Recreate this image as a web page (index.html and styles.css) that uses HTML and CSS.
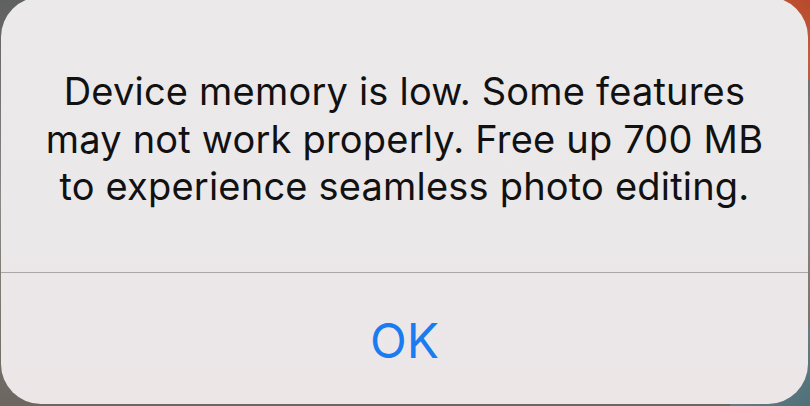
FILE: index.html
```html
<!DOCTYPE html>
<html lang="en">
<head>
<meta charset="utf-8">
<link rel="stylesheet" href="styles.css">
<title>Alert</title>
</head>
<body>
<div class="backdrop">
  <div class="alert" role="alertdialog">
    <div class="alert-body">
      <p class="alert-message">Device memory is low. Some features may not work properly. Free up 700 MB to experience seamless photo editing.</p>
    </div>
    <button class="alert-button" type="button">OK</button>
  </div>
</div>
</body>
</html>
```
FILE: styles.css
```css
html, body {
  margin: 0;
  padding: 0;
  width: 810px;
  height: 406px;
  overflow: hidden;
}
.backdrop {
  width: 810px;
  height: 406px;
  background: linear-gradient(180deg, #5f6060 0%, #8a8885 50%, #6b6660 100%);
  position: relative;
  overflow: hidden;
  display: flex;
  flex-direction: column;
}
.backdrop::before {
  content: "";
  position: absolute;
  right: 0;
  top: 0;
  width: 80px;
  height: 80px;
  background: radial-gradient(circle at 100% 0%, #b8492a 0%, #c0603e 50%, #a85a40 100%);
}
.backdrop::after {
  content: "";
  position: absolute;
  right: 0;
  bottom: 0;
  width: 80px;
  height: 80px;
  background: linear-gradient(135deg, #7a8a8c, #4f7078);
}
.alert {
  position: relative;
  z-index: 1;
  margin: -3px 0 0 1px;
  width: 807px;
  height: 407px;
  border-radius: 40px;
  background: linear-gradient(180deg, #ebe9ea 0%, #ebe8e9 60%, #ece6e7 100%);
  display: flex;
  flex-direction: column;
  overflow: hidden;
}
.alert-body {
  height: 276px;
  box-sizing: border-box;
  border-bottom: 1px solid #aaa6a7;
  display: flex;
  align-items: center;
  justify-content: center;
  padding: 10px 0 0;
}
.alert-message {
  margin: 0;
  width: 745px;
  font-family: Inter, "Noto Sans", sans-serif;
  font-size: 38px;
  line-height: 47.5px;
  color: #111111;
  text-align: center;
  letter-spacing: 0.2px;
}
.alert-button {
  flex: 1;
  border: 0;
  background: transparent;
  font-family: Inter, "Noto Sans", sans-serif;
  font-size: 48px;
  color: #1a7cf0;
  padding: 4px 0 0;
  cursor: pointer;
}
```
